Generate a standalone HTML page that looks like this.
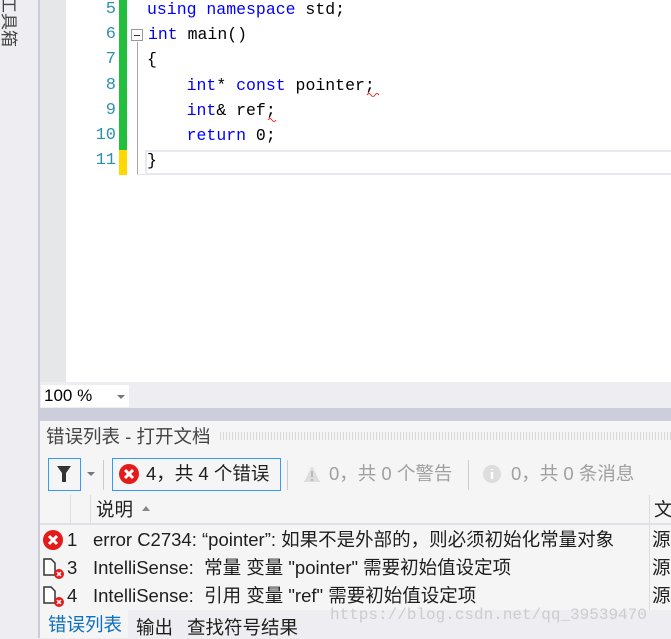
<!DOCTYPE html>
<html><head><meta charset="utf-8"><style>
*{margin:0;padding:0;box-sizing:border-box}
body{width:671px;height:638px;overflow:hidden;background:#eeeef2;position:relative;font-family:"Liberation Sans","Noto Sans CJK SC",sans-serif}
.a{position:absolute}
.ln{position:absolute;left:66px;width:50px;text-align:right;color:#2b91af;font-family:"Liberation Mono",monospace;font-size:17px}
.code{position:absolute;left:147px;color:#000;white-space:pre;font-family:"Liberation Mono",monospace;font-size:16.5px}
.k{color:#0000ff}
.cn{font-size:18.5px;color:#1e1e1e;white-space:nowrap;line-height:22px}
.grey{color:#a0a0a0}
</style></head><body>
<div class="a" style="left:38px;top:0;width:2px;height:638px;background:#ccccd6"></div>
<div class="a" style="left:-2px;top:-4px;font-size:17px;color:#444;writing-mode:vertical-rl;text-orientation:sideways">工具箱</div>
<div class="a" style="left:40px;top:0;width:26px;height:382px;background:#e6e7e8"></div>
<div class="a" style="left:66px;top:0;width:605px;height:382px;background:#fff"></div>
<div class="a" style="left:119px;top:0;width:8px;height:150px;background:#21bf3c"></div>
<div class="a" style="left:119px;top:150px;width:8px;height:25px;background:#ffd800"></div>
<div class="ln" style="top:0">5</div><div class="ln" style="top:25px">6</div><div class="ln" style="top:50px">7</div><div class="ln" style="top:76px">8</div><div class="ln" style="top:101px">9</div><div class="ln" style="top:126px">10</div><div class="ln" style="top:151px">11</div>
<div class="a" style="left:131px;top:29px;width:12px;height:12px;border:1px solid #999;background:#fff"><div class="a" style="left:2px;top:5px;width:6px;height:1px;background:#333"></div></div>
<div class="a" style="left:137px;top:42px;width:1px;height:133px;background:#aaa"></div>
<div class="a" style="left:137px;top:174px;width:534px;height:1px;background:#e4e4ec"></div>
<div class="a" style="left:145px;top:150px;width:526px;height:25px;border:2px solid #e8e8f0;border-right:none"></div>
<div class="code" style="top:0"><span class="k">using namespace</span> std;</div>
<div class="code" style="top:25px;left:148px"><span class="k">int</span> main()</div>
<div class="code" style="top:50px">{</div>
<div class="code" style="top:76px">    <span class="k">int</span>* <span class="k">const</span> pointer;</div>
<div class="code" style="top:101px">    <span class="k">int</span>&amp; ref;</div>
<div class="code" style="top:126px">    <span class="k">return</span> 0;</div>
<div class="code" style="top:151px">}</div>
<svg class="a" style="left:366px;top:92px" width="14" height="6"><path d="M1 3 Q3 0 5 3 T9 3 T13 3" stroke="#e03030" fill="none"/></svg>
<svg class="a" style="left:267px;top:117px" width="12" height="6"><path d="M1 3 Q3 0 5 3 T9 3" stroke="#e03030" fill="none"/></svg>
<div class="a" style="left:41px;top:385px;width:88px;height:22px;background:#fff;font-size:17px;padding:1px 3px">100 %</div>
<div class="a" style="left:117px;top:395px;border:4px solid transparent;border-top:4px solid #777"></div>
<div class="a" style="left:40px;top:408px;width:631px;height:13px;background:#cccedb"></div>
<div class="a" style="left:40px;top:421px;width:631px;height:217px;background:#f5f5f5"></div>
<div class="a cn" style="left:46px;top:426px;color:#444">错误列表 - 打开文档</div>
<div class="a" style="left:220px;top:432px;width:451px;height:8px;background:repeating-linear-gradient(90deg,#ccc 0 1px,transparent 1px 3px),#f5f5f5;opacity:.7"></div>
<div class="a" style="left:48px;top:458px;width:33px;height:33px;border:1px solid #3399ff"></div>
<svg class="a" style="left:57px;top:466px" width="14" height="16"><path d="M0 0H14L9 7V16H5V7Z" fill="#333"/></svg>
<div class="a" style="left:87px;top:472px;border:4px solid transparent;border-top:4px solid #777"></div>
<div class="a" style="left:103px;top:460px;width:1px;height:30px;background:#ccc"></div>
<div class="a" style="left:112px;top:458px;width:169px;height:33px;border:1px solid #3399ff"></div>
<svg class="a" style="left:118px;top:463px" width="22" height="22"><circle cx="11" cy="11" r="10" fill="#e41b1b"/><path d="M7 7L15 15M15 7L7 15" stroke="#fff" stroke-width="3"/></svg>
<div class="a cn" style="left:146px;top:463px">4，共 4 个错误</div>
<div class="a" style="left:287px;top:460px;width:1px;height:30px;background:#ccc"></div>
<svg class="a" style="left:303px;top:465px" width="18" height="18"><path d="M9 1L17 17H1Z" fill="#ddd"/><path d="M9 6V12M9 14V16" stroke="#bbb" stroke-width="2"/></svg>
<div class="a cn grey" style="left:329px;top:463px">0，共 0 个警告</div>
<div class="a" style="left:468px;top:460px;width:1px;height:30px;background:#ccc"></div>
<svg class="a" style="left:482px;top:464px" width="20" height="20"><circle cx="10" cy="10" r="9" fill="#ddd"/><path d="M10 5V6M10 8V15" stroke="#fff" stroke-width="2.5"/></svg>
<div class="a cn grey" style="left:511px;top:463px">0，共 0 条消息</div>
<div class="a" style="left:40px;top:495px;width:631px;height:30px;background:#f5f5f5;border-bottom:2px solid #e0e0e8"></div>
<div class="a" style="left:90px;top:495px;width:1px;height:30px;background:#ddd"></div>
<div class="a" style="left:70px;top:495px;width:1px;height:30px;background:#ddd"></div>
<div class="a" style="left:649px;top:495px;width:1px;height:115px;background:#ddd"></div>
<div class="a cn" style="left:96px;top:499px">说明</div>
<div class="a" style="left:142px;top:506px;border:4px solid transparent;border-bottom:5px solid #888;border-top:none"></div>
<div class="a cn" style="left:654px;top:499px">文</div>
<svg class="a" style="left:42px;top:529px" width="22" height="22"><circle cx="11" cy="11" r="10" fill="#e41b1b"/><path d="M7 7L15 15M15 7L7 15" stroke="#fff" stroke-width="3"/></svg>
<div class="a cn" style="left:67px;top:529px">1</div>
<div class="a cn" style="left:93px;top:529px">error C2734: “pointer”: 如果不是外部的，则必须初始化常量对象</div>
<div class="a cn" style="left:652px;top:529px">源</div>
<svg class="a" style="left:42px;top:557px" width="24" height="24"><path d="M2 2H9L13 6V18H2Z" fill="#fff" stroke="#333" stroke-width="1.5"/><circle cx="17" cy="17" r="5" fill="#e41b1b"/><path d="M15 15L19 19M19 15L15 19" stroke="#fff" stroke-width="1.5"/></svg>
<div class="a cn" style="left:67px;top:557px">3</div>
<div class="a cn" style="left:93px;top:557px">IntelliSense:&nbsp; 常量 变量 "pointer" 需要初始值设定项</div>
<div class="a cn" style="left:652px;top:557px">源</div>
<svg class="a" style="left:42px;top:585px" width="24" height="24"><path d="M2 2H9L13 6V18H2Z" fill="#fff" stroke="#333" stroke-width="1.5"/><circle cx="17" cy="17" r="5" fill="#e41b1b"/><path d="M15 15L19 19M19 15L15 19" stroke="#fff" stroke-width="1.5"/></svg>
<div class="a cn" style="left:67px;top:585px">4</div>
<div class="a cn" style="left:93px;top:585px">IntelliSense:&nbsp; 引用 变量 "ref" 需要初始值设定项</div>
<div class="a cn" style="left:652px;top:585px">源</div>
<div class="a" style="left:40px;top:610px;width:631px;height:28px;background:#eeeef2"></div>
<div class="a" style="left:40px;top:610px;width:88px;height:28px;background:#f5f5f5"></div>
<div class="a cn" style="left:48px;top:614px;color:#0e70c0">错误列表</div>
<div class="a cn" style="left:136px;top:617px">输出</div>
<div class="a cn" style="left:187px;top:617px">查找符号结果</div>
<div class="a" style="left:330px;top:606px;font-family:'Liberation Mono',monospace;font-size:16px;color:#ccc;white-space:nowrap">https://blog.csdn.net/qq_39539470</div>
</body></html>
